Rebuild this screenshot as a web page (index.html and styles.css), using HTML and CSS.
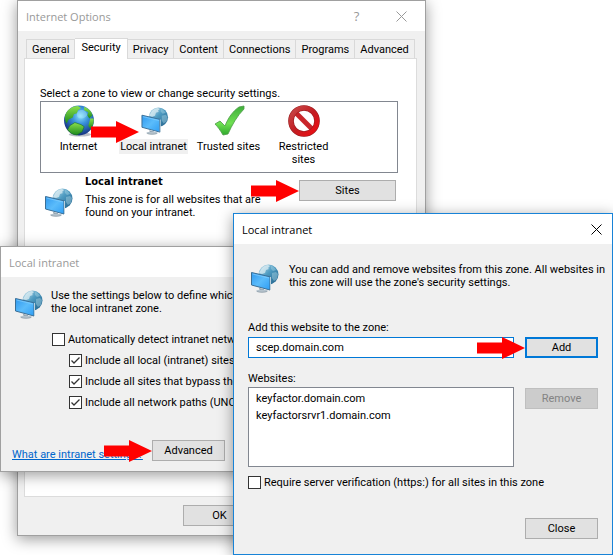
FILE: index.html
```
<!DOCTYPE html>
<html lang="en">
<head>
    <meta charset="UTF-8">
    <meta name="viewport" content="width=device-width, initial-scale=1.0">
    <title>Internet Options</title>
    <link rel="stylesheet" href="styles.css">
</head>
<body>

    <!-- Shared icons -->
    <svg class="defs" width="0" height="0" aria-hidden="true">
        <defs>
            <radialGradient id="globeBlue" cx="0.55" cy="0.35" r="0.65">
                <stop offset="0" stop-color="#8fe4fb"/>
                <stop offset="0.4" stop-color="#3a93dc"/>
                <stop offset="1" stop-color="#14307f"/>
            </radialGradient>
            <linearGradient id="land" x1="0" y1="0" x2="0" y2="1">
                <stop offset="0" stop-color="#8be04c"/>
                <stop offset="1" stop-color="#1c8a1c"/>
            </linearGradient>
            <linearGradient id="globeSteel" x1="0" y1="0" x2="1" y2="1">
                <stop offset="0" stop-color="#cfe6f0"/>
                <stop offset="0.45" stop-color="#4f9cc2"/>
                <stop offset="1" stop-color="#1d5c86"/>
            </linearGradient>
            <linearGradient id="screen" x1="0" y1="0" x2="1" y2="1">
                <stop offset="0" stop-color="#2f98ee"/>
                <stop offset="0.5" stop-color="#5bbcfb"/>
                <stop offset="1" stop-color="#2f9df3"/>
            </linearGradient>
            <linearGradient id="tick" x1="0" y1="0" x2="0" y2="1">
                <stop offset="0" stop-color="#3fae3c"/>
                <stop offset="0.6" stop-color="#6fe052"/>
                <stop offset="1" stop-color="#2fa92c"/>
            </linearGradient>
            <linearGradient id="ban" x1="0" y1="0" x2="1" y2="1">
                <stop offset="0" stop-color="#c84a4a"/>
                <stop offset="0.5" stop-color="#c21d22"/>
                <stop offset="1" stop-color="#ee0d12"/>
            </linearGradient>
            <symbol id="icon-network" viewBox="0 0 28 29">
                <circle cx="17.500" cy="10.500" r="10" fill="url(#globeSteel)"/>
                <path d="M11 4c2-2 4-3 6-3l2 1-2 2 1 1-3 1-1 3-3 1-3-1z" fill="#e3f1f5" opacity=".7"/>
                <path d="M20 2c2 0 4 2 5 4l-3 1-2-2zM21 9l4-1 2 2-1 5-3 2-2-3z" fill="#a8d4e5" opacity=".45"/>
                <path d="M0.500 8.500L19 12.800V26L0.500 21z" fill="url(#screen)" stroke="#3b6f96"/>
                <path d="M1.500 10l16.500 4" stroke="#86cffd" opacity=".7"/>
                <path d="M19.500 13v13" stroke="#bcd0dc"/>
                <path d="M8 24l5 1.300v2H9z" fill="#8799a6"/>
                <ellipse cx="11" cy="27" rx="6" ry="1.500" fill="#b4c2cc"/>
                <path d="M6 27.500c3 1 7 1 10 0" fill="none" stroke="#8c9ba5" stroke-width=".7"/>
            </symbol>
            <symbol id="icon-globe" viewBox="0 0 30 31">
                <ellipse cx="16" cy="28.500" rx="11" ry="2" fill="#b9bec7"/>
                <circle cx="15" cy="15" r="14.500" fill="url(#globeBlue)"/>
                <path d="M2 9C4 4 9 1 14 1l3 2-3 2-1 3-3 1-1 3-4 2-2 4c-2-3-2-6-1-9z" fill="url(#land)"/>
                <path d="M20 2c4 1 7 4 8 8l-3 3-2-3 1-3-4-2z" fill="url(#land)"/>
                <path d="M26 13l3 0c1 4-1 8-3 10l-2-3z" fill="url(#land)"/>
                <path d="M6 20l5-3 6 2 3 2-2 5-5 3c-4 0-7-2-9-5z" fill="url(#land)" stroke="#176b2a" stroke-width=".6"/>
                <path d="M16 5c4-1 7 2 7 5-2 3-6 4-9 2-2-3-1-6 2-7z" fill="#b9f2ff" opacity=".35"/>
            </symbol>
            <symbol id="icon-check" viewBox="0 0 32 32">
                <path d="M2 19l5-3 5 5C15 13 20 6 26 2l5-1v3C24 11 19 20 15 29l-5 1C7 25 5 22 2 19z" fill="url(#tick)" stroke="#4c9a48" stroke-width=".8"/>
            </symbol>
            <symbol id="icon-ban" viewBox="0 0 32 32">
                <path d="M8 8l16 16" stroke="#c9252a" stroke-width="5"/>
                <circle cx="16" cy="16" r="13" fill="none" stroke="#981a1d" stroke-width="5.600"/>
                <circle cx="16" cy="16" r="13" fill="none" stroke="url(#ban)" stroke-width="4.500"/>
            </symbol>
            <symbol id="icon-arrow" viewBox="0 0 48 22">
                <path d="M0 5.500h25V0l23 11-23 11v-5.500H0z" fill="#f00"/>
            </symbol>
        </defs>
    </svg>

    <!-- Internet Options -->
    <section class="window options">
        <header class="titlebar inactive">
            <h1 class="title">Internet Options</h1>
            <button class="caption-button" aria-label="Help">?</button>
            <button class="caption-button" aria-label="Close">
                <svg width="11" height="11"><path d="M.5 .5l10 10M10.500 .5l-10 10" stroke="currentColor"/></svg>
            </button>
        </header>
        <div class="options-body">
            <nav class="tabs">
                <button class="tab">General</button>
                <button class="tab active">Security</button>
                <button class="tab">Privacy</button>
                <button class="tab">Content</button>
                <button class="tab">Connections</button>
                <button class="tab">Programs</button>
                <button class="tab">Advanced</button>
            </nav>
            <div class="panel">
                <p>Select a zone to view or change security settings.</p>
                <ul class="zones">
                    <li class="zone"><svg class="zone-icon"><use href="#icon-globe"/></svg><span class="zone-name">Internet</span></li>
                    <li class="zone selected">
                        <svg class="zone-icon small"><use href="#icon-network"/></svg><span class="zone-name">Local intranet</span>
                        <svg class="arrow"><use href="#icon-arrow"/></svg>
                    </li>
                    <li class="zone"><svg class="zone-icon"><use href="#icon-check"/></svg><span class="zone-name">Trusted sites</span></li>
                    <li class="zone"><svg class="zone-icon"><use href="#icon-ban"/></svg><span class="zone-name">Restricted<br>sites</span></li>
                </ul>
                <div class="zone-info">
                    <svg class="network-icon"><use href="#icon-network"/></svg>
                    <div class="zone-text">
                        <h2 class="zone-heading">Local intranet</h2>
                        <p>This zone is for all websites that are<br>found on your intranet.</p>
                    </div>
                    <div class="pointed">
                        <button class="button wide">Sites</button>
                        <svg class="arrow"><use href="#icon-arrow"/></svg>
                    </div>
                </div>
            </div>
            <div class="options-footer">
                <button class="button">OK</button>
            </div>
        </div>
    </section>

    <!-- Local intranet settings -->
    <section class="window intranet">
        <header class="titlebar inactive">
            <h1 class="title">Local intranet</h1>
        </header>
        <div class="intranet-body">
            <div class="intro">
                <svg class="network-icon"><use href="#icon-network"/></svg>
                <p>Use the settings below to define which<br>the local intranet zone.</p>
            </div>
            <div class="checks">
                <label class="check first"><input type="checkbox">Automatically detect intranet netw</label>
                <label class="check"><input type="checkbox" checked>Include all local (intranet) sites</label>
                <label class="check"><input type="checkbox" checked>Include all sites that bypass the</label>
                <label class="check"><input type="checkbox" checked>Include all network paths (UNC</label>
            </div>
            <div class="intranet-footer">
                <a class="link" href="#">What are intranet settings?</a>
                <div class="pointed">
                    <button class="button">Advanced</button>
                    <svg class="arrow"><use href="#icon-arrow"/></svg>
                </div>
            </div>
        </div>
    </section>

    <!-- Local intranet sites -->
    <section class="window sites">
        <header class="titlebar">
            <h1 class="title">Local intranet</h1>
            <button class="caption-button" aria-label="Close">
                <svg width="11" height="11"><path d="M.5 .5l10 10M10.500 .5l-10 10" stroke="currentColor"/></svg>
            </button>
        </header>
        <div class="sites-body">
            <div class="intro">
                <svg class="network-icon"><use href="#icon-network"/></svg>
                <p>You can add and remove websites from this zone. All websites in<br>this zone will use the zone's security settings.</p>
            </div>
            <div class="form">
                <label class="field-label" for="site">Add this website to the zone:</label>
                <input class="field" id="site" type="text" value="scep.domain.com">
                <div class="pointed">
                    <button class="button default">Add</button>
                    <svg class="arrow"><use href="#icon-arrow"/></svg>
                </div>
                <label class="field-label list-label" for="list">Websites:</label>
                <select class="list" id="list" size="4">
                    <option>keyfactor.domain.com</option>
                    <option>keyfactorsrvr1.domain.com</option>
                </select>
                <button class="button remove" disabled>Remove</button>
            </div>
            <label class="check"><input type="checkbox">Require server verification (https:) for all sites in this zone</label>
            <div class="sites-footer">
                <button class="button">Close</button>
            </div>
        </div>
    </section>

</body>
</html>
```
FILE: styles.css
```
* {
    box-sizing: border-box;
    margin: 0;
    padding: 0;
}
body {
    min-height: 100vh;
    overflow: hidden;
    position: relative;
    background-color: #fff;
    color: #000;
    font-family: Roboto, "Liberation Sans", sans-serif;
    font-size: 11px;
    line-height: 13px;
}
button, input, select {
    font: inherit;
    color: inherit;
}
svg {
    display: block;
    flex: none;
}
.defs {
    position: absolute;
}

/* Windows */
.window {
    position: absolute;
    background-color: #f0f0f0;
    border: 1px solid #a0a0a0;
    box-shadow: 0 3px 14px rgba(0, 0, 0, 0.4);
}
.options {
    left: 17px;
    top: 0;
    width: 409px;
}
.intranet {
    left: 0;
    top: 246px;
    width: 240px;
}
.sites {
    left: 233px;
    right: 0;
    top: 213px;
    border-color: #1883d7;
}
.titlebar {
    display: flex;
    align-items: center;
    height: 30px;
    padding: 0 10px 0 8px;
    background-color: #fff;
}
.title {
    flex: 1;
    font-family: "Open Sans", sans-serif;
    font-size: 11px;
    font-weight: 400;
}
.caption-button {
    display: flex;
    align-items: center;
    justify-content: center;
    width: 45px;
    height: 28px;
    border: none;
    background: none;
    font-family: "Open Sans", sans-serif;
    font-size: 13px;
}
.caption-button:last-child {
    width: 11px;
}
.inactive {
    color: #999;
}
.options .titlebar {
    padding-right: 18px;
}
.options .caption-button:last-child {
    margin-left: 17px;
}

/* Buttons */
.button {
    display: block;
    width: 73px;
    height: 21px;
    background-color: #e1e1e1;
    border: 1px solid #adadad;
}
.button.wide {
    width: 97px;
}
.button.default {
    border: 2px solid #0078d7;
}
.button:disabled {
    color: #838383;
    background-color: #ccc;
    border-color: #bfbfbf;
}
.button.remove {
    margin-top: 1px;
}
.pointed {
    position: relative;
}
.arrow {
    position: absolute;
    top: 0;
    right: 100%;
    width: 48px;
    height: 22px;
}

/* Check boxes */
.check {
    display: flex;
    align-items: center;
    gap: 3px;
    white-space: nowrap;
}
.check input {
    appearance: none;
    flex: none;
    width: 13px;
    height: 13px;
    border: 1px solid #333;
    background-color: #fff;
}
.check input:checked {
    background-image: url("data:image/svg+xml,%3Csvg xmlns='http://www.w3.org/2000/svg' viewBox='0 0 11 11'%3E%3Cpath d='M1.500 5.500l2.500 2.500 5.500-5.500' fill='none' stroke='%23333' stroke-width='1.300'/%3E%3C/svg%3E");
}

/* Internet Options */
.options-body {
    padding: 7px 8px 9px 6px;
}
.tabs {
    display: flex;
    align-items: flex-end;
    padding-left: 2px;
}
.tab {
    height: 19px;
    padding: 0 5px;
    background-color: #f0f0f0;
    border: 1px solid #d9d9d9;
    border-bottom: none;
    border-left: none;
}
.tab:first-child {
    border-left: 1px solid #d9d9d9;
}
.tab.active {
    height: 21px;
    padding: 0 6px 3px;
    margin-bottom: -1px;
    background-color: #fff;
    position: relative;
}
.panel {
    min-height: 439px;
    padding: 28px 18px 0 15px;
    background-color: #fff;
    border: 1px solid #dcdcdc;
}
.zones {
    display: grid;
    grid-template-columns: repeat(4, 75px);
    height: 72px;
    margin-top: 1px;
    padding-top: 3px;
    border: 1px solid #828790;
    list-style: none;
}
.zone {
    display: flex;
    flex-direction: column;
    align-items: center;
    gap: 2px;
    position: relative;
    text-align: center;
}
.zone-icon {
    width: 32px;
    height: 32px;
}
.zone-icon.small {
    padding: 2px 0 2px 2px;
}
.zone-name {
    padding: 1px;
    white-space: nowrap;
}
.selected .zone-name {
    background-color: #f0f0f0;
}
.selected .arrow {
    top: 16px;
    right: 52px;
}
.zone-info {
    display: flex;
    margin-top: 2px;
    padding-left: 5px;
}
.zone-text {
    flex: 1;
    padding-left: 12px;
    white-space: nowrap;
}
.zone-heading {
    margin-bottom: 5px;
    font-family: "DejaVu Sans Condensed", "DejaVu Sans", sans-serif;
    font-size: 11px;
    line-height: 13px;
}
.network-icon {
    width: 28px;
    height: 29px;
}
.zone-info .network-icon {
    margin-top: 13px;
}
.zone-info .pointed {
    margin: 5px 2px 0 0;
    height: 21px;
}
.options-footer {
    padding: 8px 0 0 159px;
}

/* Local intranet settings */
.intro {
    display: flex;
    gap: 8px;
    white-space: nowrap;
}
.intro p {
    margin-top: -1px;
}
.intranet-body {
    padding: 13px 10px 10px 14px;
}
.checks {
    display: grid;
    gap: 8px;
    margin-top: 14px;
    padding-left: 54px;
}
.checks .first {
    margin-left: -17px;
}
.intranet-footer {
    display: flex;
    align-items: flex-end;
    gap: 8px;
    margin-top: 31px;
}
.link {
    margin-left: -3px;
    width: 132px;
    color: #0066cc;
    text-decoration: underline;
    white-space: nowrap;
}

/* Local intranet sites */
.sites-body {
    padding: 20px 14px 15px;
}
.sites-body .intro {
    gap: 10px;
    padding-left: 3px;
}
.form {
    display: grid;
    grid-template-columns: 1fr 73px;
    column-gap: 11px;
    margin-top: 28px;
}
.field-label {
    grid-column: 1 / -1;
    margin-bottom: 3px;
}
.list-label {
    margin-top: 14px;
    margin-bottom: 2px;
}
.field {
    width: 100%;
    height: 21px;
    padding: 0 7px;
    border: 1px solid #0078d7;
    outline: none;
    background-color: #fff;
}
.list {
    width: 100%;
    height: 80px;
    padding: 2px 3px;
    border: 1px solid #828790;
    border-radius: 0;
    background-color: #fff;
    overflow: hidden;
}
.list option {
    padding: 2px 4px;
    min-height: 17px;
}
.sites-body > .check {
    margin-top: 9px;
}
.sites-footer {
    display: flex;
    justify-content: flex-end;
    margin-top: 29px;
}
```
